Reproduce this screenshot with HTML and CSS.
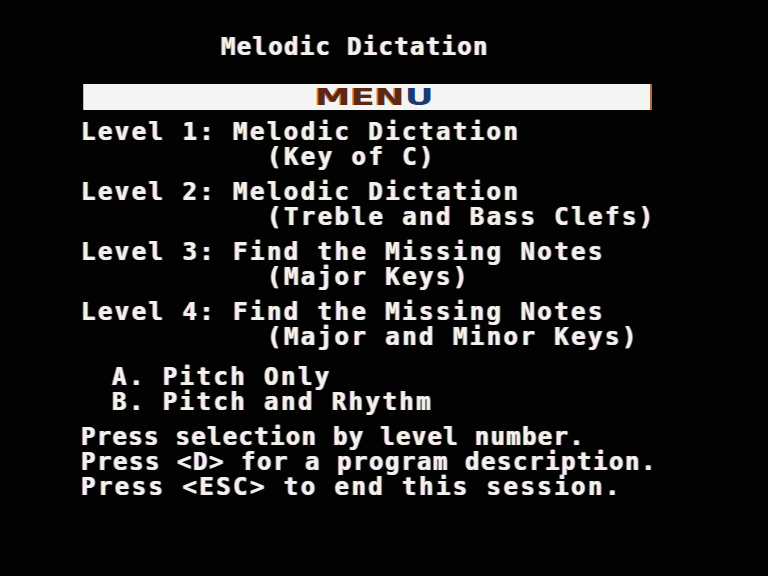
FILE: index.html
```html
<!DOCTYPE html>
<html lang="en">
<head>
<meta charset="utf-8">
<title>Melodic Dictation</title>
<link rel="stylesheet" href="styles.css">
</head>
<body>
<div class="screen">
  <div class="line title">Melodic Dictation</div>
  <div class="menu-bar"><span class="menu-label"><span class="warm">MEN</span><span class="cool">U</span></span></div>
  <div class="group">
    <div class="line">Level 1: Melodic Dictation</div>
    <div class="line sub">(Key of C)</div>
  </div>
  <div class="group">
    <div class="line">Level 2: Melodic Dictation</div>
    <div class="line sub">(Treble and Bass Clefs)</div>
  </div>
  <div class="group">
    <div class="line">Level 3: Find the Missing Notes</div>
    <div class="line sub">(Major Keys)</div>
  </div>
  <div class="group">
    <div class="line">Level 4: Find the Missing Notes</div>
    <div class="line sub">(Major and Minor Keys)</div>
  </div>
  <div class="options">
    <div class="line opt">A. Pitch Only</div>
    <div class="line opt">B. Pitch and Rhythm</div>
  </div>
  <div class="help">
    <div class="line narrow">Press selection by level number.</div>
    <div class="line mid">Press &lt;D&gt; for a program description.</div>
    <div class="line">Press &lt;ESC&gt; to end this session.</div>
  </div>
</div>
</body>
</html>
```
FILE: styles.css
```css
html, body {
  margin: 0;
  padding: 0;
  background: #020202;
}

.screen {
  width: 768px;
  height: 576px;
  box-sizing: border-box;
  padding: 35px 0 0 81px;
  background: #020202;
  color: #f3f1ee;
  font-family: "DejaVu Sans Mono", "Liberation Mono", monospace;
  font-weight: bold;
  font-size: 24px;
  overflow: hidden;
}

.line {
  height: 25px;
  line-height: 25px;
  white-space: pre;
  letter-spacing: 2.45px;
  text-shadow: -1px 0 0 rgba(214, 118, 48, 0.85), 1px 0 0 rgba(72, 150, 230, 0.85);
}

.title {
  padding-left: 140px;
  letter-spacing: 1.3px;
}

.menu-bar {
  margin-top: 24px;
  width: 566px;
  margin-left: 3px;
  height: 26px;
  line-height: 26px;
  background: #f4f4f3;
  box-shadow: 2px 0 0 #b86a32, -1px 0 0 #9cc4e8;
  padding-left: 231px;
  box-sizing: border-box;
}

.menu-label {
  display: inline-block;
  font-family: "DejaVu Sans", "Liberation Sans", sans-serif;
  font-weight: bold;
  font-size: 23px;
  letter-spacing: 0;
  transform: scaleX(1.55);
  transform-origin: left center;
}

.warm {
  color: #5c2812;
  text-shadow: -1px 0 0 rgba(200, 100, 30, 0.8);
}

.cool {
  color: #1c3a72;
}

.group {
  margin-top: 10px;
}

.sub {
  padding-left: 186px;
}

.options {
  margin-top: 15px;
}

.opt {
  padding-left: 31px;
}

.help {
  margin-top: 10px;
}

.narrow {
  letter-spacing: 1.3px;
}

.mid {
  letter-spacing: 1.55px;
}
```
